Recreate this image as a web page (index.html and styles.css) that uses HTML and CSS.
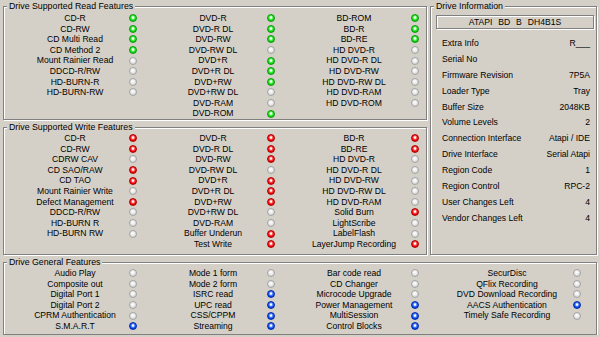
FILE: index.html
```html
<!DOCTYPE html>
<html lang="en">
<head>
    <meta charset="UTF-8">
    <title>Drive Features</title>
    <link rel="stylesheet" href="styles.css">
</head>
<body>
<div class="page">

    <fieldset class="group read">
        <legend>Drive Supported Read Features</legend>
        <div class="cols">
            <div class="col c1">
                <span class="name">CD-R</span><i class="led green"></i>
                <span class="name">CD-RW</span><i class="led green"></i>
                <span class="name">CD Multi Read</span><i class="led green"></i>
                <span class="name">CD Method 2</span><i class="led green"></i>
                <span class="name">Mount Rainier Read</span><i class="led"></i>
                <span class="name">DDCD-R/RW</span><i class="led"></i>
                <span class="name">HD-BURN-R</span><i class="led"></i>
                <span class="name">HD-BURN-RW</span><i class="led"></i>
            </div>
            <div class="col c2">
                <span class="name">DVD-R</span><i class="led green"></i>
                <span class="name">DVD-R DL</span><i class="led green"></i>
                <span class="name">DVD-RW</span><i class="led green"></i>
                <span class="name">DVD-RW DL</span><i class="led"></i>
                <span class="name">DVD+R</span><i class="led green"></i>
                <span class="name">DVD+R DL</span><i class="led green"></i>
                <span class="name">DVD+RW</span><i class="led green"></i>
                <span class="name">DVD+RW DL</span><i class="led"></i>
                <span class="name">DVD-RAM</span><i class="led"></i>
                <span class="name">DVD-ROM</span><i class="led green"></i>
            </div>
            <div class="col c3">
                <span class="name">BD-ROM</span><i class="led green"></i>
                <span class="name">BD-R</span><i class="led green"></i>
                <span class="name">BD-RE</span><i class="led green"></i>
                <span class="name">HD DVD-R</span><i class="led"></i>
                <span class="name">HD DVD-R DL</span><i class="led"></i>
                <span class="name">HD DVD-RW</span><i class="led"></i>
                <span class="name">HD DVD-RW DL</span><i class="led"></i>
                <span class="name">HD DVD-RAM</span><i class="led"></i>
                <span class="name">HD DVD-ROM</span><i class="led"></i>
            </div>
        </div>
    </fieldset>

    <fieldset class="group write">
        <legend>Drive Supported Write Features</legend>
        <div class="cols">
            <div class="col c1">
                <span class="name">CD-R</span><i class="led red"></i>
                <span class="name">CD-RW</span><i class="led red"></i>
                <span class="name">CDRW CAV</span><i class="led"></i>
                <span class="name">CD SAO/RAW</span><i class="led red"></i>
                <span class="name">CD TAO</span><i class="led red"></i>
                <span class="name">Mount Rainier Write</span><i class="led"></i>
                <span class="name">Defect Management</span><i class="led red"></i>
                <span class="name">DDCD-R/RW</span><i class="led"></i>
                <span class="name">HD-BURN R</span><i class="led"></i>
                <span class="name">HD-BURN RW</span><i class="led"></i>
            </div>
            <div class="col c2">
                <span class="name">DVD-R</span><i class="led red"></i>
                <span class="name">DVD-R DL</span><i class="led red"></i>
                <span class="name">DVD-RW</span><i class="led red"></i>
                <span class="name">DVD-RW DL</span><i class="led"></i>
                <span class="name">DVD+R</span><i class="led red"></i>
                <span class="name">DVD+R DL</span><i class="led red"></i>
                <span class="name">DVD+RW</span><i class="led red"></i>
                <span class="name">DVD+RW DL</span><i class="led"></i>
                <span class="name">DVD-RAM</span><i class="led"></i>
                <span class="name">Buffer Underun</span><i class="led red"></i>
                <span class="name">Test Write</span><i class="led red"></i>
            </div>
            <div class="col c3">
                <span class="name">BD-R</span><i class="led red"></i>
                <span class="name">BD-RE</span><i class="led red"></i>
                <span class="name">HD DVD-R</span><i class="led"></i>
                <span class="name">HD DVD-R DL</span><i class="led"></i>
                <span class="name">HD DVD-RW</span><i class="led"></i>
                <span class="name">HD DVD-RW DL</span><i class="led"></i>
                <span class="name">HD DVD-RAM</span><i class="led"></i>
                <span class="name">Solid Burn</span><i class="led red"></i>
                <span class="name">LightScribe</span><i class="led"></i>
                <span class="name">LabelFlash</span><i class="led"></i>
                <span class="name">LayerJump Recording</span><i class="led red"></i>
            </div>
        </div>
    </fieldset>

    <fieldset class="group info">
        <legend>Drive Information</legend>
        <div class="model">ATAPI BD B DH4B1S</div>
        <div class="info-rows">
            <div class="info-row"><span>Extra Info</span><span>R___</span></div>
            <div class="info-row"><span>Serial No</span><span></span></div>
            <div class="info-row"><span>Firmware Revision</span><span>7P5A</span></div>
            <div class="info-row"><span>Loader Type</span><span>Tray</span></div>
            <div class="info-row"><span>Buffer Size</span><span>2048KB</span></div>
            <div class="info-row"><span>Volume Levels</span><span>2</span></div>
            <div class="info-row"><span>Connection Interface</span><span>Atapi / IDE</span></div>
            <div class="info-row"><span>Drive Interface</span><span>Serial Atapi</span></div>
            <div class="info-row"><span>Region Code</span><span>1</span></div>
            <div class="info-row"><span>Region Control</span><span>RPC-2</span></div>
            <div class="info-row"><span>User Changes Left</span><span>4</span></div>
            <div class="info-row"><span>Vendor Changes Left</span><span>4</span></div>
        </div>
    </fieldset>

    <fieldset class="group general">
        <legend>Drive General Features</legend>
        <div class="cols">
            <div class="col c1">
                <span class="name">Audio Play</span><i class="led"></i>
                <span class="name">Composite out</span><i class="led"></i>
                <span class="name">Digital Port 1</span><i class="led"></i>
                <span class="name">Digital Port 2</span><i class="led"></i>
                <span class="name">CPRM Authentication</span><i class="led"></i>
                <span class="name">S.M.A.R.T</span><i class="led blue"></i>
            </div>
            <div class="col c2">
                <span class="name">Mode 1 form</span><i class="led"></i>
                <span class="name">Mode 2 form</span><i class="led"></i>
                <span class="name">ISRC read</span><i class="led blue"></i>
                <span class="name">UPC read</span><i class="led blue"></i>
                <span class="name">CSS/CPPM</span><i class="led blue"></i>
                <span class="name">Streaming</span><i class="led blue"></i>
            </div>
            <div class="col c3">
                <span class="name">Bar code read</span><i class="led"></i>
                <span class="name">CD Changer</span><i class="led"></i>
                <span class="name">Microcode Upgrade</span><i class="led"></i>
                <span class="name">Power Management</span><i class="led blue"></i>
                <span class="name">MultiSession</span><i class="led blue"></i>
                <span class="name">Control Blocks</span><i class="led blue"></i>
            </div>
            <div class="col c4">
                <span class="name">SecurDisc</span><i class="led"></i>
                <span class="name">QFlix Recording</span><i class="led"></i>
                <span class="name">DVD Download Recording</span><i class="led"></i>
                <span class="name">AACS Authentication</span><i class="led blue"></i>
                <span class="name">Timely Safe Recording</span><i class="led"></i>
            </div>
        </div>
    </fieldset>

</div>
</body>
</html>
```

FILE: styles.css
```css
body {
    margin: 0;
    background-color: #d4d0c8;
    color: #000;
    font-family: "Liberation Sans", Arial, sans-serif;
    font-size: 8.6px;
}

.page {
    display: grid;
    grid-template-columns: 424px 167px;
    grid-template-rows: 119px 133px 78px;
    column-gap: 3px;
    row-gap: 2px;
    padding: 1px 3px 0;
}

/* etched group boxes */
.group {
    margin: 0;
    padding: 0;
    min-width: 0;
    box-sizing: border-box;
    border: 1px solid #808080;
    box-shadow: inset 1px 1px 0 #fff, 1px 1px 0 #fff;
}

.group legend {
    margin-left: 3px;
    padding: 0 2px;
    line-height: 10px;
    font-size: 8.8px;
    background-color: #d4d0c8;
}

.read { grid-column: 1; grid-row: 1; }
.write { grid-column: 1; grid-row: 2; }
.info { grid-column: 2; grid-row: 1 / span 2; }
.general { grid-column: 1 / span 2; grid-row: 3; }

.cols {
    display: flex;
    padding-top: 1px;
}
.read .cols {
    padding-top: 2px;
}

.col {
    display: grid;
    grid-auto-rows: 10.6px;
    align-content: start;
}
.c1 { margin-left: 17px; grid-template-columns: 108px 8px; }
.c2 { margin-left: 22px; grid-template-columns: 108px 8px; }
.c3 { margin-left: 22px; grid-template-columns: 114px 8px; }
.c4 { margin-left: 22px; grid-template-columns: 132px 8px; }

.name {
    text-align: center;
    line-height: 10.6px;
    white-space: nowrap;
}

/* status lamps */
.led {
    align-self: center;
    width: 8px;
    height: 8px;
    box-sizing: border-box;
    border-radius: 50%;
    border: 1px solid #a4a4a4;
    background: radial-gradient(circle at 45% 40%, #fff 0, #ececec 2px, #d0d0d0 4px);
}
.led.green {
    border-color: #089808;
    background: radial-gradient(circle at 50% 42%, #fff 0, #fff 0.8px, #5cf55c 1.6px, #0fd80f 3px, #0cb80c 4px);
}
.led.red {
    border-color: #b00000;
    background: radial-gradient(circle at 50% 42%, #fff 0, #fff 0.8px, #ff5c5c 1.6px, #f00000 3px, #d00000 4px);
}
.led.blue {
    border-color: #0028a8;
    background: radial-gradient(circle at 50% 42%, #fff 0, #fff 0.8px, #5c8cff 1.6px, #0048f0 3px, #0038d0 4px);
}

/* drive information */
.model {
    margin: 4px 0 0 5px;
    width: 158px;
    height: 14px;
    box-sizing: border-box;
    border: 1px solid #808080;
    box-shadow: inset 1px 1px 0 #fff, 1px 1px 0 #fff;
    text-align: center;
    line-height: 12px;
    word-spacing: 3.5px;
}

.info-rows {
    display: grid;
    grid-auto-rows: 15.9px;
    margin-top: 6px;
    padding: 0 6px 0 11px;
}

.info-row {
    display: flex;
    justify-content: space-between;
    align-items: center;
    white-space: nowrap;
}
```
